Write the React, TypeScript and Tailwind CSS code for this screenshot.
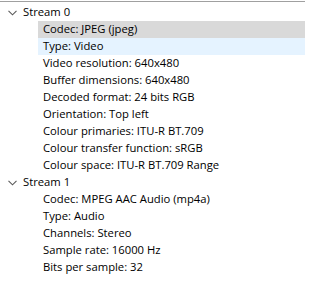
import React from "react";

const streams = [
  {
    name: "Stream 0",
    items: [
      "Codec: JPEG (jpeg)",
      "Type: Video",
      "Video resolution: 640x480",
      "Buffer dimensions: 640x480",
      "Decoded format: 24 bits RGB",
      "Orientation: Top left",
      "Colour primaries: ITU-R BT.709",
      "Colour transfer function: sRGB",
      "Colour space: ITU-R BT.709 Range",
    ],
  },
  {
    name: "Stream 1",
    items: [
      "Codec: MPEG AAC Audio (mp4a)",
      "Type: Audio",
      "Channels: Stereo",
      "Sample rate: 16000 Hz",
      "Bits per sample: 32",
    ],
  },
];

function Chevron() {
  return (
    <svg width="9" height="6" viewBox="0 0 9 6" className="text-[#5a5a5a]">
      <path d="M0.5 0.8 L4.5 4.8 L8.5 0.8" fill="none" stroke="currentColor" strokeWidth="1.1" />
    </svg>
  );
}

export default function App() {
  return (
    <div
      className="w-[305px] h-[286px] bg-white border-t border-[#a0a0a0] mt-px pt-[2px] text-[11.25px] text-black"
      style={{ fontFamily: '"Open Sans", "Liberation Sans", sans-serif' }}
    >
      {streams.map((s) => (
        <div key={s.name}>
          <div className="flex items-center h-[17px]">
            <div className="w-[23px] flex justify-center pl-[2px]">
              <Chevron />
            </div>
            <span>{s.name}</span>
          </div>
          {s.items.map((it, i) => {
            const sel = s.name === "Stream 0" && i === 0;
            const hov = s.name === "Stream 0" && i === 1;
            return (
              <div key={it} className="flex h-[17px] pl-[38px]">
                <div
                  className={
                    "flex-1 flex items-center pl-[5px] " +
                    (sel ? "bg-[#d9d9d9]" : hov ? "bg-[#e5f3ff]" : "")
                  }
                >
                  {it}
                </div>
              </div>
            );
          })}
        </div>
      ))}
    </div>
  );
}
